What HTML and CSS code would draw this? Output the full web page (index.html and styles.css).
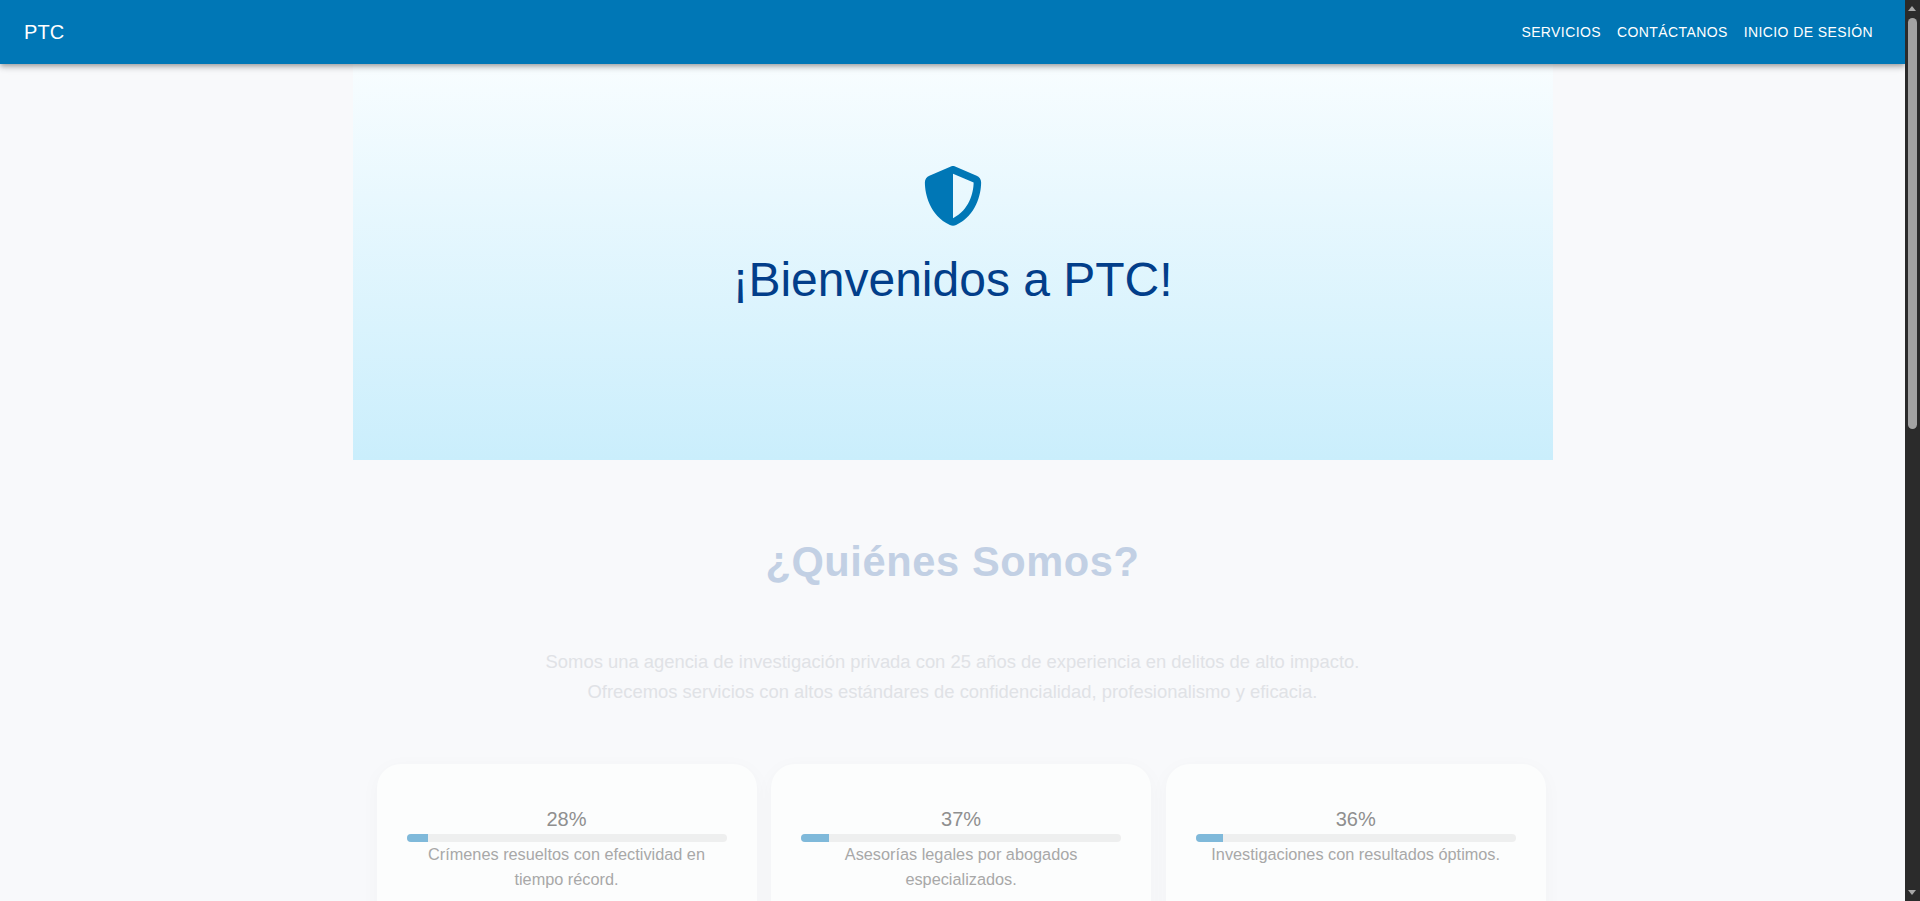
FILE: index.html
```html
<!DOCTYPE html>
<html lang="es">
<head>
  <meta charset="UTF-8">
  <meta name="viewport" content="width=device-width, initial-scale=1.0">
  <title>PTC</title>
  <link rel="stylesheet" href="styles.css">
</head>
<body>
  <div class="shell">
    <div class="page">
      <header class="appbar">
        <div class="brand">PTC</div>
        <nav class="nav">
          <a href="#">Servicios</a>
          <a href="#">Contáctanos</a>
          <a href="#">Inicio de sesión</a>
        </nav>
      </header>

      <main class="content">
        <section class="hero">
          <svg class="hero-icon" viewBox="0 0 512 512" aria-hidden="true">
            <path d="M256 0c4.6 0 9.2 1 13.4 2.9L457.7 82.8c22 9.3 38.4 31 38.3 57.2c-.5 99.2-41.3 280.7-213.6 363.2c-16.7 8-36.1 8-52.8 0C57.3 420.7 16.5 239.2 16 140c-.1-26.2 16.3-47.9 38.3-57.2L242.7 2.9C246.8 1 251.4 0 256 0zm0 66.8V444.8C394 378 431.1 230.1 432 141.4L256 66.8l0 0z"/>
          </svg>
          <h1>¡Bienvenidos a PTC!</h1>
        </section>

        <section class="about">
          <h2>¿Quiénes Somos?</h2>
          <p>Somos una agencia de investigación privada con 25 años de experiencia en delitos de alto impacto.<br>
          Ofrecemos servicios con altos estándares de confidencialidad, profesionalismo y eficacia.</p>

          <div class="cards">
            <div class="card">
              <div class="percent">28%</div>
              <div class="bar"><div class="bar-fill" style="width: 6.6%"></div></div>
              <p class="card-text">Crímenes resueltos con efectividad en tiempo récord.</p>
            </div>
            <div class="card">
              <div class="percent">37%</div>
              <div class="bar"><div class="bar-fill" style="width: 8.6%"></div></div>
              <p class="card-text">Asesorías legales por abogados especializados.</p>
            </div>
            <div class="card">
              <div class="percent">36%</div>
              <div class="bar"><div class="bar-fill" style="width: 8.4%"></div></div>
              <p class="card-text">Investigaciones con resultados óptimos.</p>
            </div>
          </div>
        </section>
      </main>
    </div>

    <div class="scrollbar">
      <span class="arrow arrow-up"></span>
      <span class="thumb"></span>
      <span class="arrow arrow-down"></span>
    </div>
  </div>
</body>
</html>
```

FILE: styles.css
```css
* {
  box-sizing: border-box;
}
html, body {
  margin: 0;
  height: 100%;
  overflow: hidden;
}
body {
  font-family: "Liberation Sans", Arial, sans-serif;
  background: #f8f9fb;
}
.shell {
  display: flex;
  height: 901px;
}
.page {
  flex: 1;
  min-width: 0;
  overflow: hidden;
}

/* top bar */
.appbar {
  position: relative;
  z-index: 2;
  height: 64px;
  padding: 0 24px;
  display: flex;
  align-items: center;
  justify-content: space-between;
  background: #0077b6;
  color: #fff;
  box-shadow: 0 2px 4px -1px rgba(0,0,0,.2), 0 4px 5px rgba(0,0,0,.14), 0 1px 10px rgba(0,0,0,.12);
}
.brand {
  font-size: 20px;
  letter-spacing: 0.15px;
}
.nav {
  display: flex;
}
.nav a {
  padding: 6px 8px;
  color: #fff;
  font-size: 14px;
  line-height: 24px;
  letter-spacing: 0.4px;
  text-decoration: none;
  text-transform: uppercase;
}

/* hero */
.content {
  width: 1200px;
  margin: 0 auto;
}
.hero {
  height: 396px;
  padding-top: 102px;
  text-align: center;
  background: linear-gradient(180deg, #f8fdff 0%, #caeefc 100%);
}
.hero-icon {
  display: block;
  width: 60px;
  height: 60px;
  margin: 0 auto;
  fill: #0077b6;
}
.hero h1 {
  margin: 26px 0 0;
  font-size: 48px;
  font-weight: 400;
  line-height: 56px;
  color: #023e8a;
}

/* quienes somos */
.about {
  padding-top: 76px;
  text-align: center;
}
.about h2 {
  margin: 0;
  font-size: 41.6px;
  line-height: 52px;
  letter-spacing: 0.6px;
  color: #c2d0e4;
}
.about > p {
  margin: 59px 0 0;
  font-size: 18.4px;
  line-height: 30px;
  color: #e0e2e6;
}
.cards {
  display: flex;
  gap: 14.6px;
  margin-top: 57px;
  padding-left: 24px;
}
.card {
  flex: 0 0 380px;
  height: 190px;
  padding: 41px 30px;
  border-radius: 24px;
  background: #fcfdfd;
  box-shadow: 0 4px 20px rgba(0,0,0,.03);
}
.percent {
  font-size: 20px;
  line-height: 28px;
  color: #8f8f8f;
}
.bar {
  height: 8px;
  margin-top: 1px;
  border-radius: 4px;
  overflow: hidden;
  background: #eeefef;
}
.bar-fill {
  height: 100%;
  background: #7fb9da;
}
.card-text {
  margin: 0;
  font-size: 16.3px;
  line-height: 24.5px;
  color: #a8a8a8;
}

/* the browser scrollbar, as it stands in the screenshot */
.scrollbar {
  position: relative;
  flex: 0 0 15px;
  background: #2b2b2b;
}
.thumb {
  position: absolute;
  top: 18px;
  left: 3px;
  width: 9px;
  height: 411px;
  border-radius: 5px;
  background: #a3a3a3;
}
.arrow {
  position: absolute;
  left: 3px;
  width: 0;
  height: 0;
  border-left: 4.5px solid transparent;
  border-right: 4.5px solid transparent;
}
.arrow-up {
  top: 6px;
  border-bottom: 5px solid #a8a8a8;
}
.arrow-down {
  bottom: 6px;
  border-top: 5px solid #a8a8a8;
}
```
